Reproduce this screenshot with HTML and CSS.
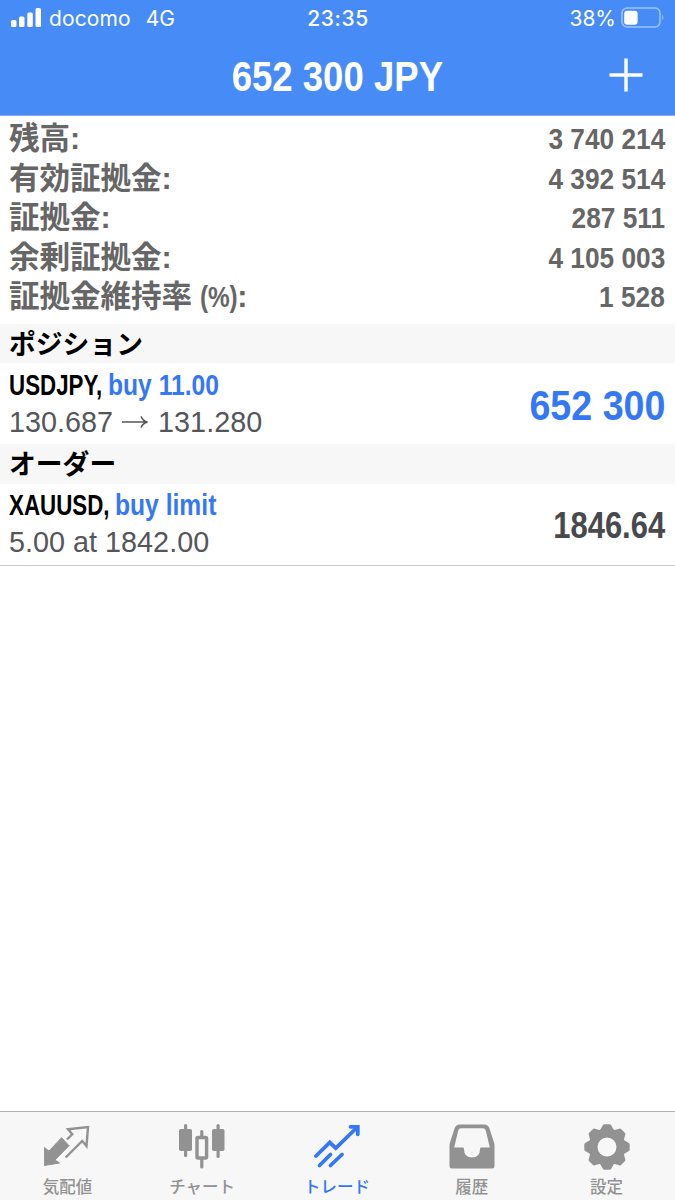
FILE: index.html
```html
<!DOCTYPE html>
<html lang="ja">
<head>
  <meta charset="UTF-8" />
  <meta name="viewport" content="width=device-width, initial-scale=1.0" />
  <title>トレード</title>
  <link rel="stylesheet" href="styles.css">
</head>
<body>
  <header>
    <div class="status">
      <div class="carrier">
        <svg width="31" height="20" viewBox="0 0 31 20" fill="#fff">
          <rect x="0" y="12" width="5.5" height="7" rx="1.5" />
          <rect x="8" y="8.5" width="5.5" height="10.5" rx="1.5" />
          <rect x="16.3" y="4.5" width="5.5" height="14.5" rx="1.5" />
          <rect x="24.5" y="0" width="5.5" height="19" rx="1.5" />
        </svg>
        <span class="docomo">docomo</span>
        <span>4G</span>
      </div>
      <div class="time">23:35</div>
      <div class="battery">
        <span>38%</span>
        <svg width="44" height="22" viewBox="0 0 44 22">
          <rect x="1" y="1" width="38" height="19" rx="5" fill="none" stroke="#9fc3fb" stroke-width="1.6" />
          <rect x="3.2" y="3.7" width="13.4" height="14" rx="3" fill="#fff" />
          <path d="M41.3 7.5q2.2 3 0 6z" fill="#9fc3fb" />
        </svg>
      </div>
    </div>
    <div class="title-bar">
      <h1>652 300 JPY</h1>
      <svg class="plus" width="34" height="34" viewBox="0 0 34 34" stroke="#fff" stroke-width="3.4">
        <path d="M0.5 17h33M17 0.5v33" />
      </svg>
    </div>
  </header>

  <main>
    <dl class="account">
      <div><dt>残高:</dt><dd>3 740 214</dd></div>
      <div><dt>有効証拠金:</dt><dd>4 392 514</dd></div>
      <div><dt>証拠金:</dt><dd>287 511</dd></div>
      <div><dt>余剰証拠金:</dt><dd>4 105 003</dd></div>
      <div><dt>証拠金維持率 <span class="unit">(%)</span>:</dt><dd>1 528</dd></div>
    </dl>

    <h2>ポジション</h2>
    <div class="item">
      <div class="info">
        <div class="name">
          <span class="symbol usdjpy">USDJPY,</span>
          <span class="side">buy 11.00</span>
        </div>
        <div class="price">
          130.687
          <svg width="27" height="14" viewBox="0 0 27 14" fill="none" stroke="#55565a" stroke-width="1.5">
            <path d="M0 7h25M19 1.5q2 4.5 6.5 5.5q-4.5 1-6.5 5.5" />
          </svg>
          131.280
        </div>
      </div>
      <div class="profit">652 300</div>
    </div>

    <h2>オーダー</h2>
    <div class="item last">
      <div class="info">
        <div class="name">
          <span class="symbol xauusd">XAUUSD,</span>
          <span class="side">buy limit</span>
        </div>
        <div class="price">5.00 at 1842.00</div>
      </div>
      <div class="current">1846.64</div>
    </div>
  </main>

  <nav>
    <a class="tab">
      <svg width="46" height="46" viewBox="0 0 46 46">
        <path d="M.3 23.5l4.7 3.5L17.6 13.7l7.4 8L11 36l4.500 3L.3 41.500z" fill="#929292" stroke="#929292" stroke-linejoin="round" />
        <path d="M23 15.500l5.300-5.200-4.300-5L44 3l-1.500 19-4.300-5L21.700 33.500" fill="none" stroke="#929292" stroke-width="2.4" />
      </svg>
      <span>気配値</span>
    </a>
    <a class="tab">
      <svg width="46" height="46" viewBox="0 0 46 46" fill="#929292">
        <rect x="0" y="5" width="13" height="22" rx="1.8" />
        <rect x="5" y="0" width="3.2" height="33" rx="1.5" />
        <rect x="33" y="5" width="12.5" height="22" rx="1.8" />
        <rect x="37.5" y="0" width="3.2" height="34" rx="1.5" />
        <rect x="21.2" y="6" width="3.2" height="7" rx="1.5" />
        <rect x="21.2" y="34" width="3.2" height="10.5" rx="1.5" />
        <rect x="18" y="13.5" width="9.6" height="20.5" rx="1" fill="none" stroke="#929292" stroke-width="3.4" />
      </svg>
      <span>チャート</span>
    </a>
    <a class="tab active">
      <svg width="46" height="46" viewBox="0 0 46 46" fill="none" stroke="#3478f6" stroke-width="3.8" stroke-linecap="round">
        <path d="M2 32L15.800 18.500l6 5.700L43 3.500" />
        <path d="M36.500 2.800h7.300v7.500" />
        <path d="M5.500 41.500L16.500 30.500M16.500 41.500L28 30.500" />
      </svg>
      <span>トレード</span>
    </a>
    <a class="tab">
      <svg width="46" height="46" viewBox="0 0 46 46" fill="#929292">
        <path fill-rule="evenodd" d="M11 .5h24q4 0 5.300 3.500L45 18.500q.5 1.500.5 3V42q0 2.500-2.500 2.500H3Q.5 44.500.5 42V21.500q0-1.500.5-3L5.700 4Q7 .5 11 .5zM12 4.300q-2 0-2.700 2L5.200 23.500h8.800q1 0 1 1.500 0 8.500 8 8.500t8-8.500q0-1.500 1-1.500h8.800L36.700 6.300q-.7-2-2.700-2z" />
      </svg>
      <span>履歴</span>
    </a>
    <a class="tab">
      <svg width="46" height="46" viewBox="-23 -23 46 46" fill="#929292">
        <defs>
          <path id="tooth" d="M-8-15L-4.300-21.500Q-3.800-22.700-2.500-22.700H2.500Q3.800-22.700 4.300-21.500L8-15z" />
        </defs>
        <use href="#tooth" />
        <use href="#tooth" transform="rotate(45)" />
        <use href="#tooth" transform="rotate(90)" />
        <use href="#tooth" transform="rotate(135)" />
        <use href="#tooth" transform="rotate(180)" />
        <use href="#tooth" transform="rotate(225)" />
        <use href="#tooth" transform="rotate(270)" />
        <use href="#tooth" transform="rotate(315)" />
        <circle r="14" fill="none" stroke="#929292" stroke-width="9" />
      </svg>
      <span>設定</span>
    </a>
  </nav>
</body>
</html>
```
FILE: styles.css
```css
* {
  box-sizing: border-box;
}
body {
  margin: 0;
  height: 1200px;
  display: flex;
  flex-direction: column;
  background: #fff;
  font-family: "Liberation Sans", "Noto Sans CJK JP", sans-serif;
}
svg {
  display: block;
  flex: none;
}
header {
  height: 116px;
  background: #478bf6;
  border-bottom: 1px solid #8ba8ea;
  color: #fff;
}
.status {
  display: grid;
  grid-template-columns: 1fr auto 1fr;
  align-items: center;
  height: 37px;
  padding: 0 10px 0 11px;
  font: 21px Inter, sans-serif;
}
.carrier, .battery {
  display: flex;
  align-items: center;
}
.carrier svg {
  margin: -1px 7px 0 0;
}
.docomo {
  margin-right: 15px;
  letter-spacing: 0.1px;
}
.time {
  font-weight: 500;
  letter-spacing: 0.6px;
}
.battery {
  justify-content: flex-end;
}
.battery svg {
  margin: -1px 0 0 5px;
}
.title-bar {
  display: grid;
  grid-template-columns: 1fr auto 1fr;
  align-items: center;
  height: 78px;
  padding-right: 32px;
}
h1 {
  grid-column: 2;
  margin: 0 -16px 0 16px;
  font-size: 43px;
  line-height: 78px;
  transform: scaleX(0.85);
}
.plus {
  justify-self: end;
  margin-top: -3px;
}
main {
  flex: 1;
}
.account {
  margin: 0;
  padding: 3px 10px 7px 9px;
  color: #666;
}
.account div {
  display: flex;
  justify-content: space-between;
  height: 39.6px;
  line-height: 40px;
}
dt {
  font-size: 30.6px;
  font-weight: bold;
  line-height: 39px;
  letter-spacing: -0.1px;
}
.unit {
  display: inline-block;
  margin-right: -8px;
  font-size: 29px;
  transform: scaleX(0.84);
  transform-origin: left;
}
dd {
  margin: 0;
  font-size: 29.5px;
  font-weight: bold;
  transform: scaleX(0.89);
  transform-origin: right;
}
h2 {
  height: 39.5px;
  margin: 0;
  padding-left: 9px;
  background: #f7f7f7;
  font: bold 26.8px/37px "Noto Sans CJK JP", sans-serif;
}
.item {
  display: flex;
  justify-content: space-between;
  align-items: center;
  height: 81px;
  padding: 0 10px 0 9px;
}
.last {
  height: 82px;
  border-bottom: 1px solid #c8c7cc;
}
.name {
  display: flex;
  height: 37px;
  font-size: 29px;
  font-weight: bold;
  line-height: 34px;
  white-space: nowrap;
}
.symbol, .side {
  transform: scaleX(0.77);
  transform-origin: left;
}
.usdjpy {
  width: 99px;
}
.xauusd {
  width: 106px;
}
.side {
  color: #3478f6;
  transform: scaleX(0.85);
}
.price {
  display: flex;
  align-items: center;
  gap: 9px;
  height: 35px;
  color: #55565a;
  font-size: 28.8px;
}
.profit, .current {
  padding-top: 3px;
  font-size: 43px;
  font-weight: bold;
  transform: scaleX(0.875);
  transform-origin: right;
}
.profit {
  color: #3478f6;
}
.current {
  color: #48494d;
  font-size: 36px;
  transform: scaleX(0.86);
}
nav {
  display: flex;
  height: 89px;
  padding-right: 1px;
  border-top: 1px solid #b2b2b2;
  background: #f7f7f7;
}
.tab {
  flex: 1;
  display: flex;
  flex-direction: column;
  align-items: center;
  padding-top: 12px;
  color: #929292;
  font: 500 16.5px/24px "Noto Sans CJK JP", sans-serif;
}
.tab span {
  margin-top: 4px;
}
.active {
  color: #3478f6;
}
```
